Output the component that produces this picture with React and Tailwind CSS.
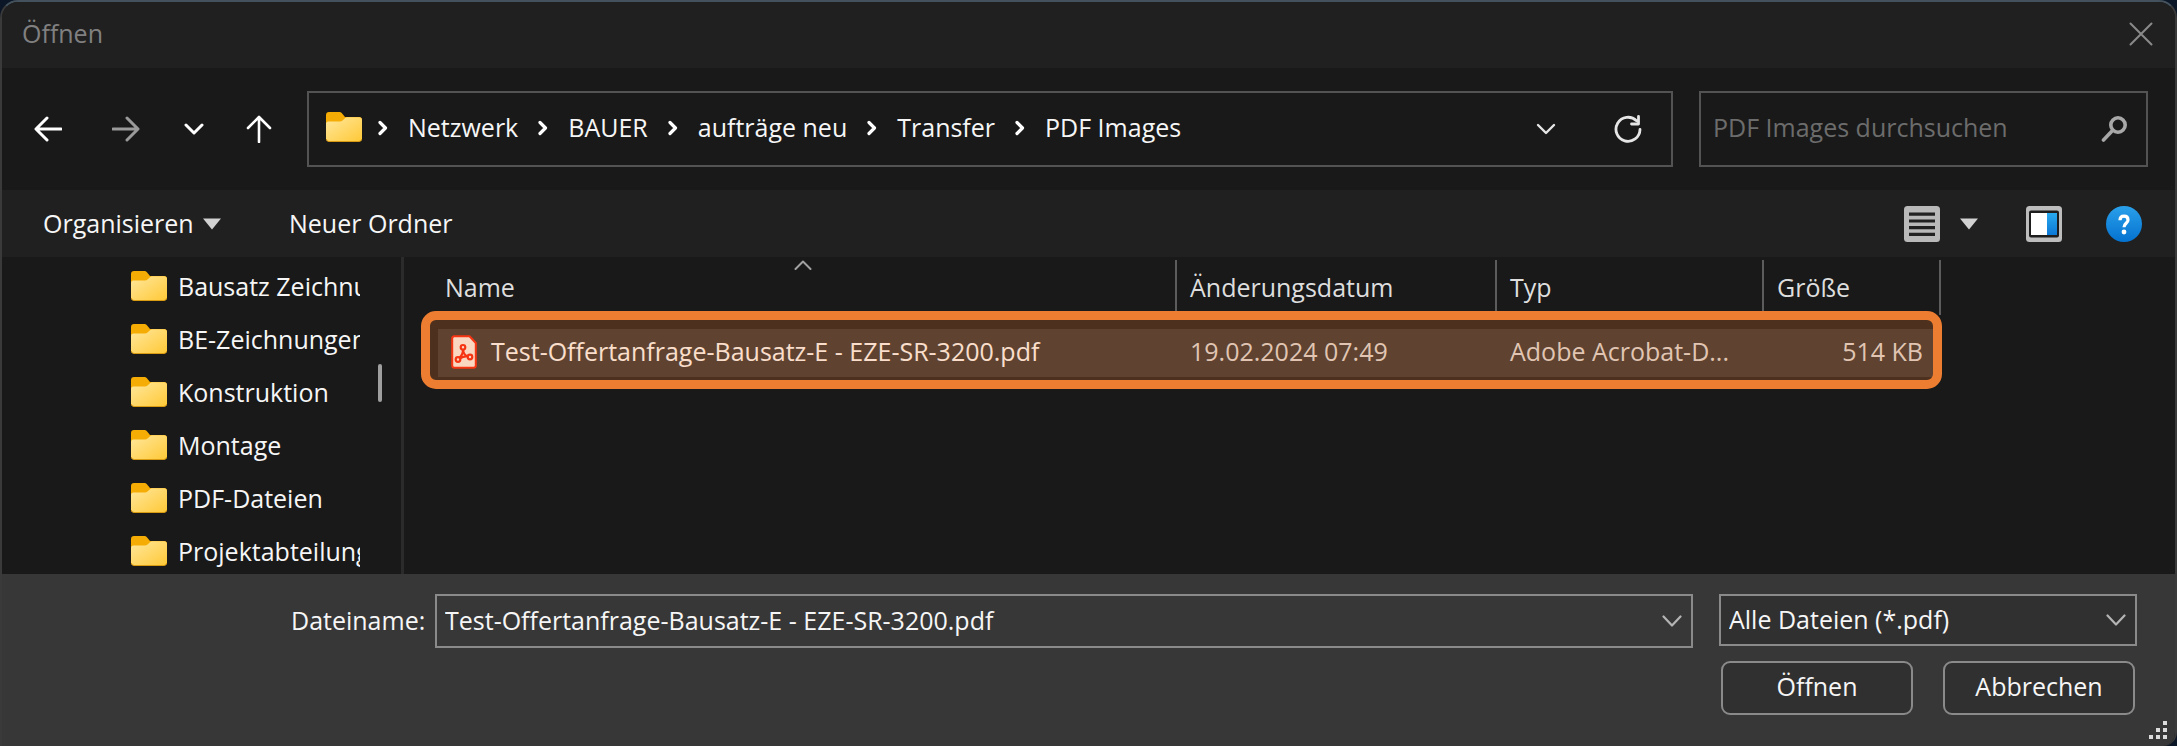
const folders = [
  'Bausatz Zeichnungen',
  'BE-Zeichnungen',
  'Konstruktion',
  'Montage',
  'PDF-Dateien',
  'Projektabteilung',
];

const crumbs = ['Netzwerk', 'BAUER', 'aufträge neu', 'Transfer', 'PDF Images'];

const fileName = 'Test-Offertanfrage-Bausatz-E - EZE-SR-3200.pdf';

function Folder() {
  return (
    <svg className="mb-[2px] h-[30px] w-9 shrink-0" viewBox="0 0 36 30" aria-hidden="true">
      <defs>
        <linearGradient id="folderFront" x1="0" y1="0" x2="1" y2="1">
          <stop offset="0" stopColor="#ffe79c" />
          <stop offset="1" stopColor="#ffc937" />
        </linearGradient>
      </defs>
      <path d="M0 3a3 3 0 0 1 3-3h10.500a3 3 0 0 1 2.200 1L19 5h14a3 3 0 0 1 3 3v19H0z" fill="#f5ad06" />
      <path d="M0 12a2.500 2.500 0 0 1 2.500-2.500h11.500c1 0 1.800-.3 2.500-1L19 6.200c.6-.6 1.300-.9 2.200-.9H33a3 3 0 0 1 3 3V26.500a3 3 0 0 1-3 3H3a3 3 0 0 1-3-3z" fill="url(#folderFront)" />
      <path d="M.3 27a3 3 0 0 0 2.700 2.500h30a3 3 0 0 0 2.700-2.500" fill="none" stroke="#d99b12" strokeWidth="1" />
    </svg>
  );
}

function Stroke({ d, className, viewBox, width = 2.5 }) {
  return (
    <svg className={className} viewBox={viewBox} fill="none" stroke="currentColor" strokeWidth={width} strokeLinecap="round" strokeLinejoin="round" aria-hidden="true">
      <path d={d} />
    </svg>
  );
}

function CrumbChevron() {
  return <Stroke className="h-4 w-[10px] shrink-0 text-white" viewBox="0 0 10 16" width={3.2} d="M2 2.500l5.500 5.500L2 13.500" />;
}

function Triangle() {
  return (
    <svg className="h-3 w-[18px]" viewBox="0 0 18 12" aria-hidden="true">
      <path d="M0 0.500h18L9 11.500z" fill="#d2d2d2" />
    </svg>
  );
}

function PdfIcon() {
  return (
    <svg className="h-[34px] w-[26px] shrink-0" viewBox="0 0 26 34" aria-hidden="true">
      <path d="M3 1.200h15.500L24.800 8v22.500a2.300 2.300 0 0 1-2.300 2.300h-19A2.300 2.300 0 0 1 1.200 30.500V3.500A2.300 2.300 0 0 1 3 1.200z" fill="#fff6f2" stroke="#fa1e0a" strokeWidth="2" />
      <g fill="none" stroke="#fa1e0a" strokeWidth="2.200">
        <circle cx="12" cy="12.300" r="2.300" />
        <circle cx="7" cy="24.500" r="2.300" />
        <circle cx="19" cy="22" r="2.300" />
        <path d="M12 14.500c0 3.500-1.500 6.500-3.800 8.300M12 14.500c.3 3.200 2 6 4.900 7.200M9 23.200c2.500-1.500 5-2.200 7.800-1.800" />
      </g>
    </svg>
  );
}

function HeaderCell({ children, sorted }) {
  return (
    <th className="p-0 text-left align-top font-normal" aria-sort={sorted ? 'ascending' : undefined}>
      <button type="button" className="relative block h-[55px] w-full border-r-2 border-[#5c5c5c] pl-[13px] text-left leading-[55px]">
        <span className={sorted ? '-ml-[6px]' : ''}>{children}</span>
        {sorted && (
          <Stroke className="absolute top-0 left-[356px] h-[10px] w-[18px] text-[#a0a0a0]" viewBox="0 0 18 10" width={2} d="M1.500 9L9 1.500 16.500 9" />
        )}
      </button>
    </th>
  );
}

export default function App() {
  return (
    <div className="h-screen bg-[#0b1626]">
      <div className="flex h-full flex-col overflow-hidden rounded-t-[18px] rounded-br-[14px] border-x-2 border-t-2 border-x-[#3a3a3a] border-t-[#43525c] bg-[#191919] font-['Open_Sans','Noto_Sans',sans-serif] text-[25px] text-[#f6f6f6]">
        <header className="flex h-[66px] shrink-0 items-center justify-between bg-[#202020] pr-[22px] pb-[2px] pl-5">
          <h1 className="text-[#808080]">Öffnen</h1>
          <button type="button" aria-label="Schließen" className="text-[#8a8a8a]">
            <Stroke className="h-6 w-6" viewBox="0 0 24 24" width={2} d="M1.500 1.500l21 21M22.500 1.500l-21 21" />
          </button>
        </header>

        <div className="flex h-[122px] shrink-0 items-center pr-[27px] pl-8">
          <button type="button" aria-label="Zurück" className="w-[78px] text-white">
            <Stroke className="h-[26px] w-[28px]" viewBox="0 0 28 26" width={3} d="M13 2L2 13l11 11M3 13h24" />
          </button>
          <button type="button" aria-label="Vorwärts" className="w-[72px] text-[#9a9a9a]">
            <Stroke className="h-[26px] w-[28px]" viewBox="0 0 28 26" width={3} d="M15 2l11 11-11 11M25 13H1" />
          </button>
          <button type="button" aria-label="Zuletzt besucht" className="w-[62px] text-white">
            <Stroke className="h-3 w-[20px]" viewBox="0 0 20 12" width={3} d="M2 2l8 8 8-8" />
          </button>
          <button type="button" aria-label="Nach oben" className="w-[61px] text-white">
            <Stroke className="h-7 w-[26px]" viewBox="0 0 26 28" width={2.6} d="M2 13L13 2l11 11M13 3v24" />
          </button>

          <div className="flex h-[76px] flex-1 items-center border-2 border-[#535353] pr-[29px] pl-[17px]">
            <div className="flex flex-1 items-center pb-[2px]">
              <Folder />
              <nav aria-label="Pfad" className="flex flex-1 items-center gap-[20px] pl-4">
                {crumbs.map((crumb) => (
                  <span key={crumb} className="flex items-center gap-[20px]">
                    <CrumbChevron />
                    <a href="#" className="whitespace-nowrap">{crumb}</a>
                  </span>
                ))}
              </nav>
            </div>
            <button type="button" aria-label="Vorherige Orte" className="mr-[58px] text-[#e6e6e6]">
              <Stroke className="h-3 w-[20px]" viewBox="0 0 20 12" width={2.4} d="M2 2l8 8 8-8" />
            </button>
            <button type="button" aria-label="Aktualisieren" className="text-[#e6e6e6]">
              <svg className="h-7 w-7" viewBox="0 0 28 28" fill="none" stroke="currentColor" strokeWidth="2.800" strokeLinecap="round" strokeLinejoin="round" aria-hidden="true">
                <path d="M22.500 5.800A12 12 0 1 0 26 14.500M24.500 1.500v7.500h-7" />
              </svg>
            </button>
          </div>

          <label className="ml-[26px] flex h-[76px] w-[449px] items-center border-2 border-[#535353] pr-[18px] pb-[2px] pl-[12px]">
            <input
              type="search"
              aria-label="PDF Images durchsuchen"
              placeholder="PDF Images durchsuchen"
              className="min-w-0 flex-1 bg-transparent outline-none placeholder:text-[#6c6c6c]"
            />
            <svg className="h-[27px] w-[27px]" viewBox="0 0 27 27" fill="none" stroke="#a8a8a8" strokeWidth="3.600" strokeLinecap="round" aria-hidden="true">
              <circle cx="17" cy="10" r="7.200" />
              <path d="M11.500 15.500L2.500 25" />
            </svg>
          </label>
        </div>

        <div className="flex h-[67px] shrink-0 items-center bg-[#202020] pr-[33px] pl-[41px]">
          <button type="button" className="flex w-[178px] items-center justify-between">
            Organisieren
            <Triangle />
          </button>
          <button type="button" className="ml-[68px]">Neuer Ordner</button>
          <button type="button" aria-label="Ansicht ändern" className="ml-auto">
            <svg className="h-9 w-9" viewBox="0 0 36 36" aria-hidden="true">
              <rect width="36" height="36" rx="3.500" fill="#b9b9b9" />
              <path d="M5 8.200h26M5 15h26M5 21.700h26M5 28.400h26" stroke="#222" strokeWidth="3.200" />
            </svg>
          </button>
          <button type="button" aria-label="Weitere Optionen" className="ml-5">
            <Triangle />
          </button>
          <button type="button" aria-label="Vorschaufenster" className="ml-[48px]">
            <svg className="h-9 w-9" viewBox="0 0 36 36" aria-hidden="true">
              <defs>
                <linearGradient id="pane" x1="0" y1="0" x2="0" y2="1">
                  <stop offset="0" stopColor="#29a9ee" />
                  <stop offset="1" stopColor="#0b78d6" />
                </linearGradient>
              </defs>
              <rect width="36" height="36" rx="3.500" fill="#bdbdbd" />
              <rect x="3" y="4.500" width="30" height="27" rx="2" fill="#1d1d1d" />
              <rect x="5" y="7" width="16" height="22" fill="#fff" />
              <rect x="21" y="7" width="10" height="22" fill="url(#pane)" />
            </svg>
          </button>
          <button type="button" aria-label="Hilfe" className="ml-11">
            <svg className="h-9 w-9" viewBox="0 0 36 36" aria-hidden="true">
              <defs>
                <linearGradient id="help" x1="0" y1="0" x2="0" y2="1">
                  <stop offset="0" stopColor="#2aa0ea" />
                  <stop offset="1" stopColor="#0472d0" />
                </linearGradient>
              </defs>
              <circle cx="18" cy="18" r="18" fill="url(#help)" />
              <path d="M14 14.200c0-2.600 1.600-4 4-4s4 1.400 4 3.700c0 3.300-4 3.500-4 7.300" fill="none" stroke="#fff" strokeWidth="3.200" />
              <circle cx="18" cy="26" r="2.400" fill="#fff" />
            </svg>
          </button>
        </div>

        <main className="flex min-h-0 flex-1 overflow-hidden">
          <aside className="flex w-[402px] shrink-0 border-r-[3px] border-[#2b2b2b] pt-[3px]">
            <ul className="w-[358px] overflow-hidden pl-[129px]">
              {folders.map((name) => (
                <li key={name}>
                  <a href="#" className="flex h-[53px] items-center gap-[11px] whitespace-nowrap">
                    <Folder />
                    {name}
                  </a>
                </li>
              ))}
            </ul>
            <div className="mt-[104px] ml-[18px] h-[38px] w-1 rounded-full bg-[#9f9f9f]" />
          </aside>

          <section className="min-w-0 flex-1 overflow-hidden pt-[3px] pl-[34px]">
            <div className="relative w-[1503px]">
              <table className="w-full table-fixed border-separate border-spacing-0">
                <colgroup>
                  <col className="w-[739px]" />
                  <col className="w-[320px]" />
                  <col className="w-[267px]" />
                  <col className="w-[177px]" />
                </colgroup>
                <thead className="text-[#dedede]">
                  <tr className="h-[69px]">
                    <HeaderCell sorted>Name</HeaderCell>
                    <HeaderCell>Änderungsdatum</HeaderCell>
                    <HeaderCell>Typ</HeaderCell>
                    <HeaderCell>Größe</HeaderCell>
                  </tr>
                </thead>
                <tbody>
                  <tr className="h-12 bg-[#303030]">
                    <td className="p-0 pb-[2px] pl-[13px]">
                      <span className="flex items-center gap-[14px] text-white">
                        <PdfIcon />
                        {fileName}
                      </span>
                    </td>
                    <td className="p-0 pb-[2px] pl-[13px] text-[#dedede]">19.02.2024 07:49</td>
                    <td className="p-0 pb-[2px] pl-[13px] text-[#dedede]">Adobe Acrobat-D...</td>
                    <td className="p-0 pr-[18px] pb-[2px] text-right text-[#dedede]">514 KB</td>
                  </tr>
                </tbody>
              </table>
              <div className="pointer-events-none absolute top-[51px] -right-px -left-[17px] h-[78px] rounded-[15px] border-[9px] border-[#ed7d31] bg-[#ed7d31]/25" />
            </div>
          </section>
        </main>

        <footer className="relative h-[172px] shrink-0 bg-[#373737] pt-[20px] pr-[38px] pl-[289px]">
          <div className="flex items-start">
            <label htmlFor="file-name" className="w-[144px] shrink-0 leading-[52px]">Dateiname:</label>
            <div className="flex h-[54px] flex-1 items-center border-2 border-[#8a8a8a] pr-[9px] pl-2">
              <input id="file-name" type="text" defaultValue={fileName} className="min-w-0 flex-1 bg-transparent outline-none" />
              <button type="button" aria-label="Liste öffnen" className="text-[#b4b4b4]">
                <Stroke className="h-3 w-[20px]" viewBox="0 0 20 12" width={2.2} d="M1.500 1.500l8.500 9 8.500-9" />
              </button>
            </div>
            <div className="relative ml-[26px] w-[418px]">
              <select aria-label="Dateityp" className="h-[52px] w-full appearance-none border-2 border-[#8a8a8a] bg-[#303030] pl-2 outline-none">
                <option>Alle Dateien (*.pdf)</option>
              </select>
              <Stroke className="pointer-events-none absolute top-5 right-[11px] h-3 w-[20px] text-[#b4b4b4]" viewBox="0 0 20 12" width={2.2} d="M1.500 1.500l8.500 9 8.500-9" />
            </div>
          </div>
          <div className="mt-[13px] flex justify-end gap-[30px] pr-[2px]">
            <button type="button" className="h-[54px] w-[192px] rounded-[9px] border-2 border-[#8a8a8a] bg-[#303030] pb-[2px]">Öffnen</button>
            <button type="button" className="h-[54px] w-[192px] rounded-[9px] border-2 border-[#8a8a8a] bg-[#303030] pb-[2px]">Abbrechen</button>
          </div>
          <svg className="absolute right-[7px] bottom-[6px] h-[19px] w-[19px]" viewBox="0 0 19 19" fill="#dcdcdc" aria-hidden="true">
            <rect x="14" y="0" width="4" height="4" />
            <rect x="7" y="7" width="4" height="4" />
            <rect x="14" y="7" width="4" height="4" />
            <rect x="0" y="14" width="4" height="4" />
            <rect x="7" y="14" width="4" height="4" />
            <rect x="14" y="14" width="4" height="4" />
          </svg>
        </footer>
      </div>
    </div>
  );
}
